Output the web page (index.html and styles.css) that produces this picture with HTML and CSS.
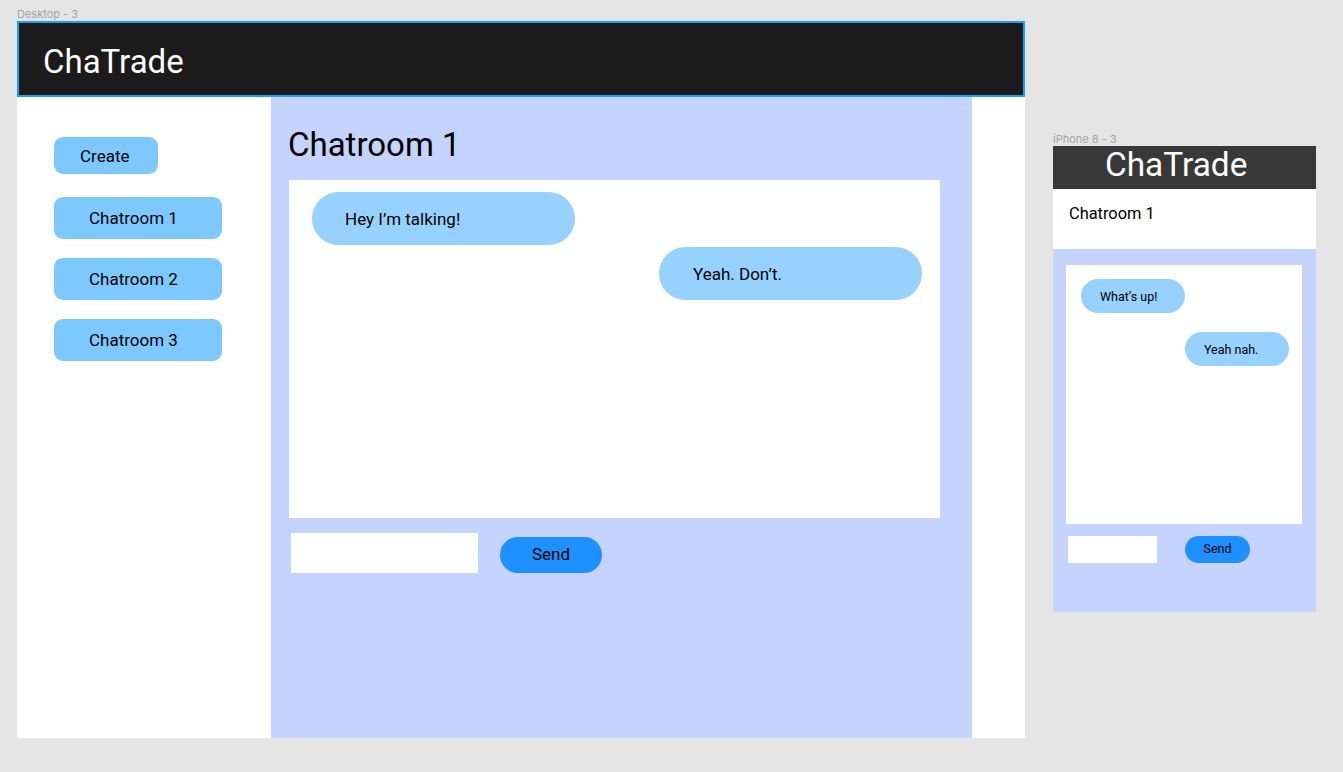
FILE: index.html
```html
<!DOCTYPE html>
<html lang="en">
<head>
<meta charset="utf-8">
<title>ChaTrade</title>
<link rel="stylesheet" href="styles.css">
</head>
<body>
<div class="canvas">
  <section class="board">
    <div class="board-label">Desktop - 3</div>
    <div class="desktop">
      <header class="d-header">ChaTrade</header>
      <div class="d-body">
        <aside class="sidebar">
          <button class="btn-create">Create</button>
          <div class="room-list">
            <button class="btn-room">Chatroom 1</button>
            <button class="btn-room">Chatroom 2</button>
            <button class="btn-room">Chatroom 3</button>
          </div>
        </aside>
        <main class="room">
          <h1 class="room-title">Chatroom 1</h1>
          <div class="chat-box">
            <div class="bubble bubble-left">Hey I’m talking!</div>
            <div class="bubble bubble-right">Yeah. Don’t.</div>
          </div>
          <div class="compose">
            <div class="input"></div>
            <button class="btn-send">Send</button>
          </div>
        </main>
        <div class="gutter"></div>
      </div>
    </div>
  </section>
  <section class="board phone-board">
    <div class="board-label">iPhone 8 - 3</div>
    <div class="phone">
      <header class="p-header">ChaTrade</header>
      <div class="p-sub">Chatroom 1</div>
      <div class="p-body">
        <div class="p-chat">
          <div class="p-bubble p-left">What’s up!</div>
          <div class="p-bubble p-right">Yeah nah.</div>
        </div>
        <div class="p-compose">
          <div class="p-input"></div>
          <button class="p-send">Send</button>
        </div>
      </div>
    </div>
  </section>
</div>
</body>
</html>
```

FILE: styles.css
```css
* { box-sizing: border-box; }
html, body { margin: 0; padding: 0; }
body {
  background: #e5e5e5;
  font-family: Roboto, "Liberation Sans", sans-serif;
  color: #000;
  width: 1343px;
  height: 772px;
  overflow: hidden;
}
button {
  font-family: inherit;
  border: none;
  margin: 0;
  color: #000;
  cursor: pointer;
}
.canvas {
  display: flex;
  align-items: flex-start;
  padding: 7px 0 0 17px;
  gap: 28px;
}
.board-label {
  font-family: Inter, Roboto, sans-serif;
  font-size: 11px;
  line-height: 14px;
  color: #a3a3a3;
}
/* Desktop frame */
.desktop {
  width: 1008px;
  display: flex;
  flex-direction: column;
}
.d-header {
  height: 76px;
  background: #1b1b1b;
  border: 2px solid #18a0fb;
  color: #fff;
  font-size: 33px;
  line-height: 38px;
  padding: 20px 0 0 24px;
}
.d-body {
  display: flex;
  height: 641px;
}
.sidebar {
  width: 254px;
  background: #fff;
  padding: 40px 0 0 37px;
  display: flex;
  flex-direction: column;
  align-items: flex-start;
  gap: 23px;
}
.btn-create {
  width: 104px;
  height: 37px;
  border-radius: 9px;
  background: #7dc8ff;
  font-size: 17px;
  padding: 0 0 0 26px;
  text-align: left;
}
.room-list {
  display: flex;
  flex-direction: column;
  gap: 19px;
}
.btn-room {
  width: 168px;
  height: 42px;
  border-radius: 9px;
  background: #7dc8ff;
  font-size: 17px;
  text-align: left;
  padding: 0 0 0 35px;
}
.room {
  width: 701px;
  background: #c4d4ff;
  padding: 29px 32px 0 18px;
}
.room-title {
  margin: 0 0 16px -1px;
  font-weight: 400;
  font-size: 33px;
  line-height: 38px;
}
.chat-box {
  width: 651px;
  height: 338px;
  background: #fff;
  padding-top: 12px;
  display: flex;
  flex-direction: column;
  gap: 2px;
}
.bubble {
  width: 263px;
  height: 53px;
  border-radius: 27px;
  background: #96d1ff;
  font-size: 17px;
  display: flex;
  align-items: center;
  padding-left: 33px;
}
.bubble-left { margin-left: 23px; }
.bubble-right { align-self: flex-end; margin-right: 18px; padding-left: 34px; }
.compose {
  margin-top: 15px;
  display: flex;
  align-items: flex-end;
  gap: 22px;
}
.input {
  width: 187px;
  height: 40px;
  background: #fff;
  margin-left: 2px;
}
.btn-send {
  width: 102px;
  height: 36px;
  border-radius: 18px;
  background: #1e90ff;
  font-size: 17px;
  padding: 0 0 2px;
}
.gutter {
  flex: 1;
  background: #fff;
}
/* Phone frame */
.phone-board { margin-top: 125px; }
.phone {
  width: 263px;
  display: flex;
  flex-direction: column;
}
.p-header {
  height: 43px;
  background: #383838;
  color: #fff;
  font-size: 33.4px;
  line-height: 38px;
  padding-left: 52px;
}
.p-sub {
  height: 60px;
  background: #fff;
  font-size: 16.4px;
  line-height: 19px;
  padding: 15px 0 0 16px;
}
.p-body {
  height: 363px;
  background: #c4d4ff;
  padding: 16px 14px 0 13px;
}
.p-chat {
  width: 236px;
  height: 259px;
  background: #fff;
  padding-top: 14px;
  display: flex;
  flex-direction: column;
  gap: 19px;
}
.p-bubble {
  width: 104px;
  height: 34px;
  border-radius: 17px;
  background: #96d1ff;
  font-size: 12.5px;
  display: flex;
  align-items: center;
  padding-left: 19px;
}
.p-left { margin-left: 15px; }
.p-right { align-self: flex-end; margin-right: 13px; }
.p-compose {
  margin-top: 12px;
  display: flex;
  align-items: flex-end;
  gap: 28px;
}
.p-input {
  width: 89px;
  height: 27px;
  background: #fff;
  margin-left: 2px;
}
.p-send {
  width: 65px;
  height: 27px;
  border-radius: 14px;
  background: #1e90ff;
  font-size: 12.5px;
  padding: 0 0 2px;
}
```
